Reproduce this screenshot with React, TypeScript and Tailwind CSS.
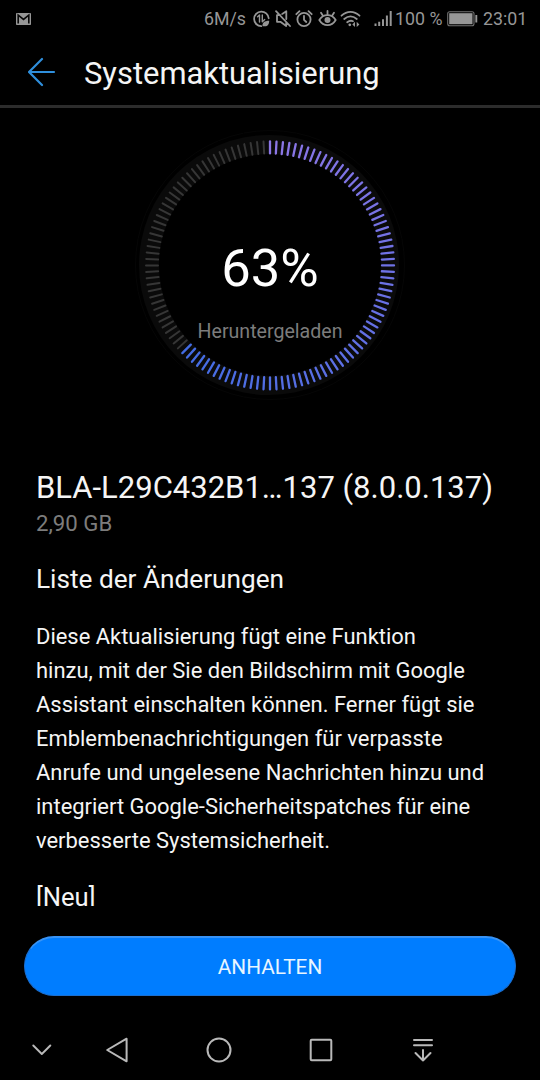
import type { ReactNode } from "react";

const TICKS = 120;
const PROGRESS = 63;

// purple at the top, blue where the progress ends
function tickColor(i: number, lit: number) {
  const k = i / lit;
  const from = [140, 118, 230];
  const to = [66, 108, 228];
  const c = from.map((v, n) => Math.round(v + (to[n] - v) * k));
  return `rgb(${c.join(",")})`;
}

function ProgressDial({ percent }: { percent: number }) {
  const lit = Math.ceil((percent / 100) * TICKS);
  return (
    <div className="relative mx-auto h-[272px] w-[272px]">
      <svg className="block" width="272" height="272" viewBox="-136 -136 272 272" fill="none">
        <circle r="134.5" stroke="#060606" strokeWidth="1" />
        <circle cx="-1" r="130" fill="#0a0a0a" />
        <circle r="111" fill="#000" />
        {Array.from({ length: TICKS }).map((_, i) => (
          <line
            key={i}
            x1="0"
            x2="0"
            y1="-124"
            y2="-112"
            transform={`translate(0 0.4) rotate(${i * 3})`}
            stroke={i < lit ? tickColor(i, lit) : "#363636"}
            strokeWidth={i < lit ? 2.3 : 2}
            strokeLinecap="round"
          />
        ))}
      </svg>
      <div className="absolute inset-0 flex flex-col items-center">
        <p className="mt-[107px] text-[52.5px] leading-[64px] text-white">{percent}%</p>
        <p className="mt-5 text-[19.6px] leading-6 text-[#7c7c7c]">Heruntergeladen</p>
      </div>
    </div>
  );
}

function StatusIcon({ className, w, children }: { className?: string; w: number; children: ReactNode }) {
  return (
    <svg
      className={`shrink-0 ${className ?? ""}`}
      width={w}
      height="20"
      viewBox={`0 0 ${w} 20`}
      fill="none"
      stroke="currentColor"
      strokeWidth="1.8"
      strokeLinecap="round"
      strokeLinejoin="round"
    >
      {children}
    </svg>
  );
}

function StatusBar() {
  return (
    <div className="flex h-9 items-center pt-px text-[17.8px] leading-5 text-[#969696]">
      <svg className="ml-4 shrink-0" width="15" height="12" viewBox="0 0 15 12">
        <rect width="15" height="12" rx="0.8" fill="#969696" />
        <path d="M2.2 10.5V2.2L7.5 6.4l5.3-4.2v8.3" fill="none" stroke="#080808" strokeWidth="1.6" />
      </svg>

      <span className="ml-[173px] w-[48px] shrink-0 whitespace-nowrap">6M/s</span>

      {/* data saver */}
      <StatusIcon w={18}>
        <path d="M16.7 9.3A7.3 7.3 0 1 0 9.2 17.2" />
        <path d="M5.6 7.7L7.5 6v7M10.3 6v6.8L12.7 10.6" strokeWidth="1.4" />
        <path d="M10.5 17.2C10.2 13.7 12.2 11.8 17.2 11.7C17.2 15.5 15.3 18 11.8 17.2Z" fill="currentColor" stroke="none" />
      </StatusIcon>

      {/* muted */}
      <StatusIcon className="ml-1" w={18}>
        <path d="M6.5 6.2H3v6.6h3.4l5.8 4.2V13.6M8.2 4.9L12.3 2.3V10M2 2.2L16 17" />
      </StatusIcon>

      {/* alarm */}
      <StatusIcon className="ml-[3px]" w={18}>
        <circle cx="9" cy="10.5" r="6.6" />
        <path d="M9 6.8v4l2.3 2.2M1.3 5.2L4.5 2.2M16.7 5.2L13.5 2.2" />
      </StatusIcon>

      {/* eye comfort */}
      <StatusIcon className="ml-[5px]" w={19}>
        <path d="M1.3 11C3.5 7.5 6 6.2 9.5 6.2S15.5 7.5 17.7 11C15.5 14.7 13 16.2 9.5 16.2S3.5 14.7 1.3 11Z" />
        <circle cx="9.5" cy="11.1" r="3" fill="currentColor" stroke="none" />
        <path d="M9.5 2v3.5M3 3.7l1.8 2.8M16 3.7L14.2 6.5" />
      </StatusIcon>

      {/* wifi */}
      <StatusIcon className="ml-[3px]" w={21}>
        <path d="M1.5 6.7C7 1.7 14 1.7 19.5 6.7M4.2 10C8.3 6.5 12.7 6.5 16.8 10M7.2 13.2C9.5 11.5 11.5 11.5 13 12.2" />
        <circle cx="9.8" cy="15.8" r="1.4" fill="currentColor" stroke="none" />
        <path d="M15 12.8v5.2l-2.7-2.6ZM16.7 12.8v5.2l2.7-2.6Z" fill="currentColor" stroke="none" />
      </StatusIcon>

      {/* signal */}
      <StatusIcon className="ml-[13px]" w={18}>
        <path
          d="M1.5 14.5V17M5.2 12.8V17M9 10.2V17M12.9 6.4V17M16.7 2V17"
          strokeWidth="2"
          strokeLinecap="butt"
        />
      </StatusIcon>
      <span className="ml-[3px] w-[52px] shrink-0 whitespace-nowrap">100 %</span>

      {/* battery */}
      <StatusIcon w={32}>
        <rect x="0.7" y="2.7" width="26.3" height="14" rx="2" strokeWidth="1.1" opacity="0.75" />
        <rect x="2.2" y="4.2" width="23.3" height="11" fill="currentColor" stroke="none" />
        <path d="M29.3 6v7.5" strokeWidth="1.9" strokeLinecap="butt" />
      </StatusIcon>
      <span className="ml-1 shrink-0">23:01</span>
    </div>
  );
}

function Header() {
  return (
    <header className="flex h-[72px] shrink-0 items-center border-b-[3px] border-[#2c2c2c]">
      <button type="button" aria-label="Zurück" className="ml-7 mt-0.5 shrink-0 text-[#2f8fdc]">
        <svg
          width="28"
          height="30"
          viewBox="0 0 28 30"
          fill="none"
          stroke="currentColor"
          strokeWidth="2.2"
          strokeLinecap="round"
          strokeLinejoin="round"
        >
          <path d="M26 15H1.5M14 2L1 15L14 28" />
        </svg>
      </button>
      <h1 className="ml-7 mt-1.5 text-[30.9px] leading-9">Systemaktualisierung</h1>
    </header>
  );
}

function NavBar() {
  return (
    <nav className="mt-auto flex h-[60px] shrink-0 items-center text-[#b9b9b9]">
      <svg className="ml-8" width="20" height="12" viewBox="0 0 20 12" fill="none" stroke="currentColor" strokeWidth="1.9" strokeLinecap="round" strokeLinejoin="round">
        <path d="M1.3 1.5L9.8 10L18.3 1.5" />
      </svg>
      <svg className="ml-[53px]" width="24" height="28" viewBox="0 0 24 28" fill="none" stroke="currentColor" strokeWidth="2" strokeLinejoin="round">
        <path d="M21.6 2.7V25.3L2.2 14Z" />
      </svg>
      <svg className="ml-[77px]" width="26" height="26" viewBox="0 0 26 26" fill="none" stroke="currentColor" strokeWidth="2">
        <circle cx="13" cy="13" r="11.5" />
      </svg>
      <svg className="ml-[77px]" width="24" height="24" viewBox="0 0 24 24" fill="none" stroke="currentColor" strokeWidth="2">
        <rect x="1.7" y="1.7" width="20.6" height="20.6" rx="1" />
      </svg>
      <svg className="ml-[79px]" width="22" height="26" viewBox="0 0 22 26" fill="none" stroke="currentColor" strokeWidth="2" strokeLinecap="round" strokeLinejoin="round">
        <path d="M2 3H20M2 8.3H20M11 13V23.5M3.5 16L11 23.5L18.5 16" />
      </svg>
    </nav>
  );
}

export default function App() {
  return (
    <div className="flex h-[1080px] w-[540px] flex-col overflow-hidden bg-black font-[Roboto,sans-serif] text-[#f5f5f5]">
      <StatusBar />
      <Header />

      <main className="h-[798px] shrink-0 overflow-hidden pt-[21px]">
        <ProgressDial percent={PROGRESS} />

        <div className="px-9 pt-[69px]">
          <h2 className="whitespace-nowrap text-[31px] leading-9">BLA-L29C432B1…137 (8.0.0.137)</h2>
          <p className="mt-[3px] text-[22.2px] leading-7 text-[#7c7c7c]">2,90 GB</p>
          <h3 className="mt-[26px] text-[26.2px] leading-8">Liste der Änderungen</h3>
          <p className="mt-[25px] whitespace-nowrap text-[21.95px] leading-[34px]">
            Diese Aktualisierung fügt eine Funktion
            <br />
            hinzu, mit der Sie den Bildschirm mit Google
            <br />
            Assistant einschalten können. Ferner fügt sie
            <br />
            Emblembenachrichtigungen für verpasste
            <br />
            Anrufe und ungelesene Nachrichten hinzu und
            <br />
            integriert Google-Sicherheitspatches für eine
            <br />
            verbesserte Systemsicherheit.
          </p>
          <h3 className="mt-[23px] text-[25.6px] leading-8">[Neu]</h3>
        </div>
      </main>

      <button
        type="button"
        className="mx-6 mt-[30px] h-[60px] shrink-0 rounded-full border border-t-2 border-[#1b6fd0] border-t-[#3893f5] bg-[#007dff] pt-0.5 text-[20.8px] text-[#e8f6ff]"
      >
        ANHALTEN
      </button>

      <NavBar />
    </div>
  );
}
